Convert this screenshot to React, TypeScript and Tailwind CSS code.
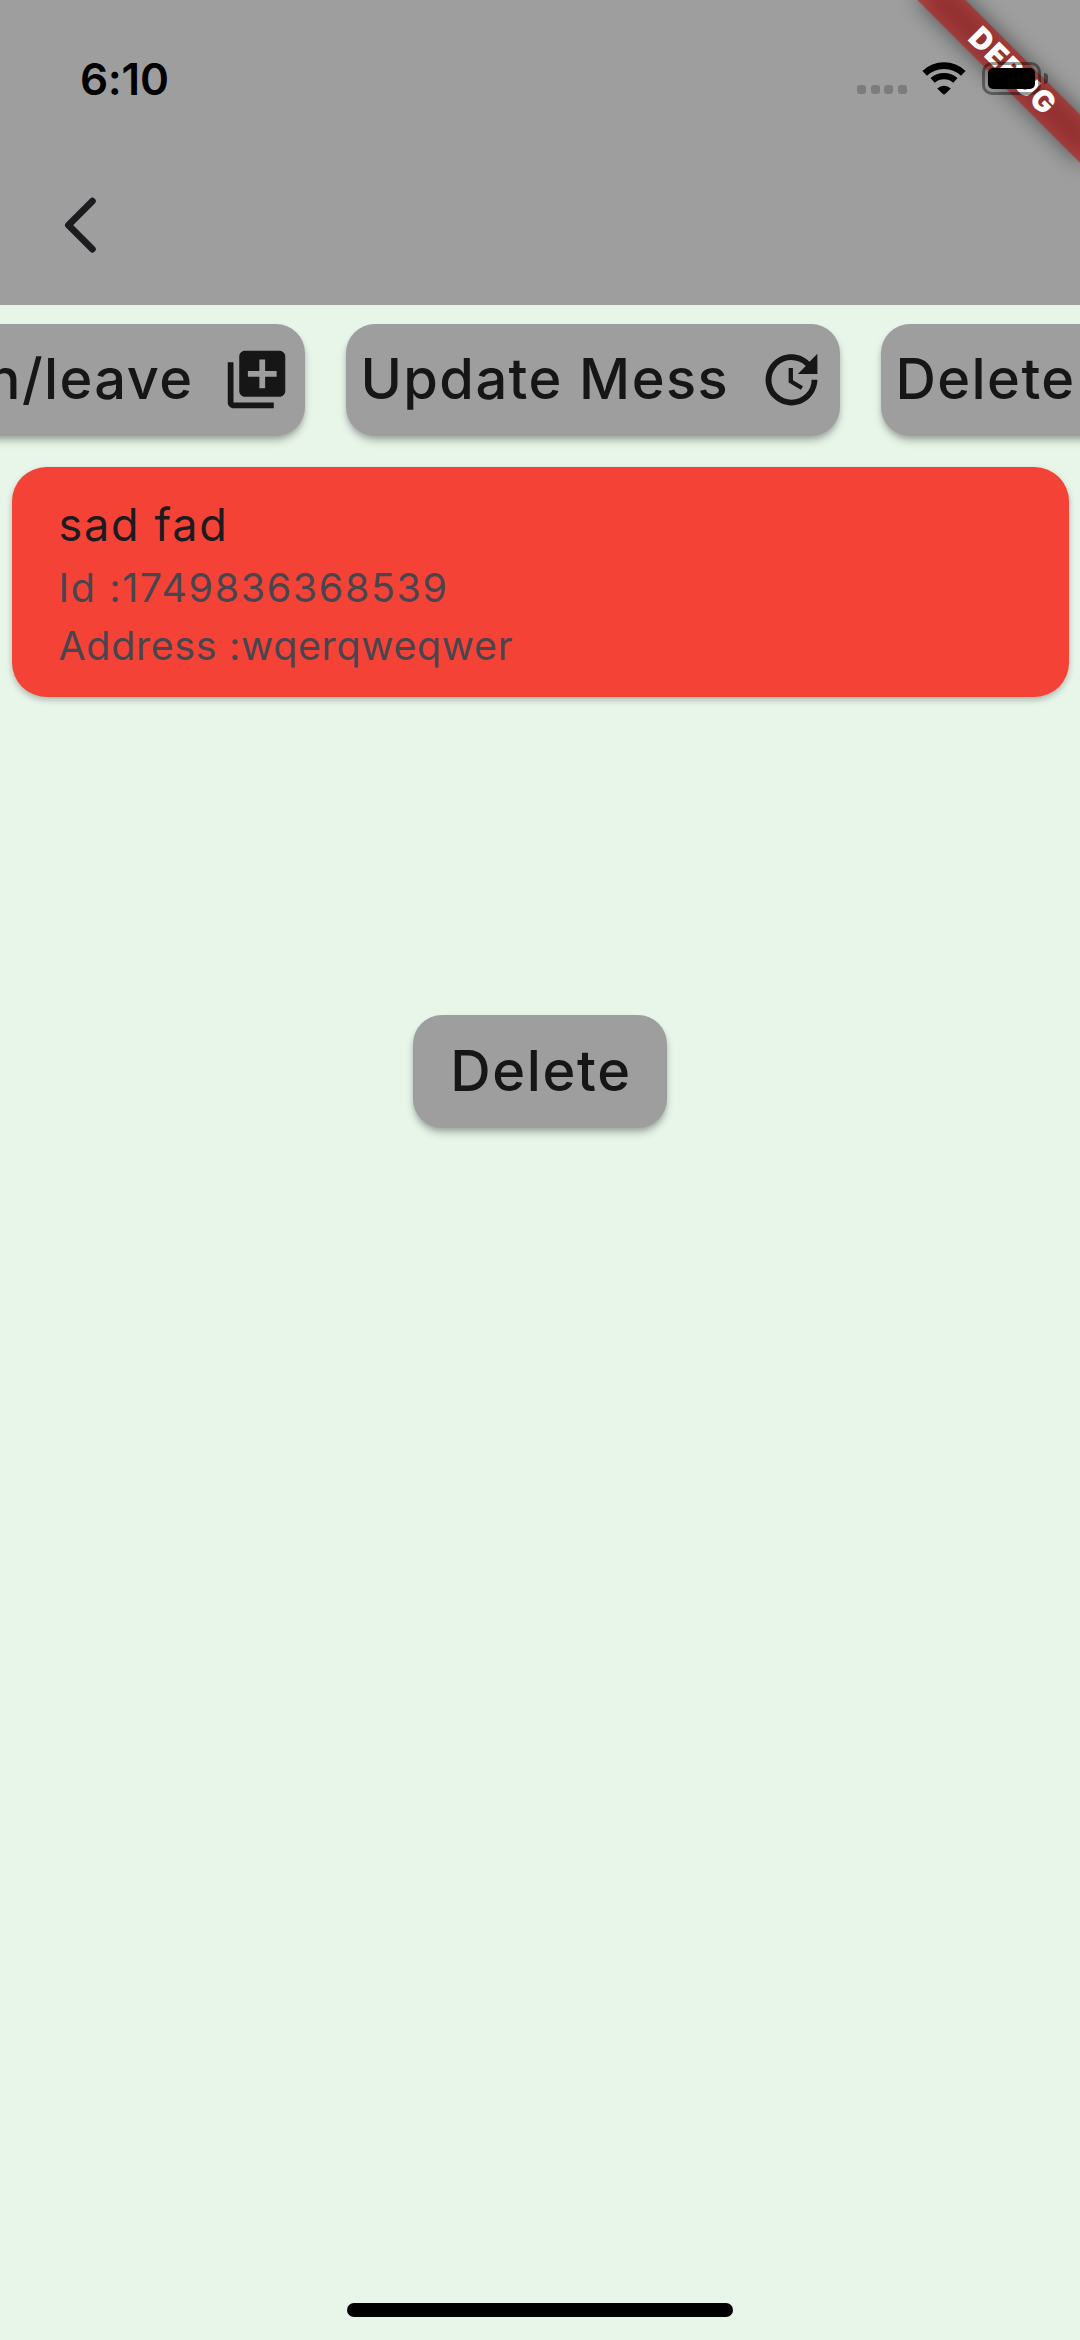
import React from "react";
import { MdLibraryAdd, MdUpdate, MdDelete } from "react-icons/md";

const raised = "shadow-[0_6px_9px_-1px_rgba(0,0,0,0.22),0_3px_4px_rgba(0,0,0,0.12)]";

function StatusBar() {
  return (
    <div className="relative z-20 flex h-[144px] items-start justify-between pl-[80px] pr-[32px] pt-[61.5px] text-black">
      <span className="mt-[-5px] text-[44px] leading-[44px] font-semibold tracking-[-0.3px]">6:10</span>
      <div className="flex items-start">
        <div className="mt-[23.5px] flex gap-[4.5px]">
          {[0, 1, 2, 3].map((i) => (
            <span key={i} className="size-[9px] rounded-[3px] bg-[#7c7c7c]" />
          ))}
        </div>
        <svg className="ml-[15.5px] h-[33px] w-[44px]" viewBox="0 0 44 33" fill="none">
          <path d="M2.7 12.8 A28 28 0 0 1 41.3 12.8" transform="translate(0 -1.5)" stroke="#000" strokeWidth="6.6" />
          <path d="M10.6 19.2 A17.3 17.3 0 0 1 33.4 19.2" transform="translate(0 -0.8)" stroke="#000" strokeWidth="6.4" />
          <path d="M15.2 26.4 A10 10 0 0 1 28.8 26.4 L22.8 32.2 Q22 32.9 21.2 32.2 Z" fill="#000" />
        </svg>
        <div className="ml-[15.5px] mt-[0.5px] flex items-center">
          <div className="h-[33px] w-[59px] rounded-[10px] border-[3px] border-black/40 p-[3px]">
            <div className="h-full w-full rounded-[5px] bg-black" />
          </div>
          <div className="ml-[3.5px] h-[11px] w-[4px] rounded-r-full bg-black/45" />
        </div>
      </div>
    </div>
  );
}

function DebugBanner() {
  return (
    <div className="absolute right-0 top-0 z-10 size-[320px] overflow-hidden">
      <div className="absolute right-0 top-0 size-0 rotate-45">
        <div className="absolute left-[-115.2px] top-[80.64px] h-[34.56px] w-[230.4px] bg-black/50 blur-[11.4px]" />
        <div className="absolute left-[-115.2px] top-[80.64px] flex h-[34.56px] w-[230.4px] items-center justify-center bg-[#B71C1C]/63 pl-[6px] text-[29.6px] leading-none font-black tracking-[1.4px] text-white">
          DEBUG
        </div>
      </div>
    </div>
  );
}

function ActionButton({ label, icon }: { label: string; icon: React.ReactNode }) {
  return (
    <button
      className={`flex h-[112px] shrink-0 items-center rounded-[29px] bg-[#9e9e9e] pl-[15px] pr-[14.5px] text-[56px] leading-[80px] font-[450] tracking-[1.4px] whitespace-nowrap text-[#161616] ${raised}`}
    >
      <span className="mr-[28px] pb-[2px]">{label}</span>
      <span className="ml-auto size-[69px] shrink-0">{icon}</span>
    </button>
  );
}

export default function App() {
  return (
    <div className="relative flex h-[2340px] w-[1080px] flex-col overflow-hidden bg-[#e8f5e9] font-['Inter',sans-serif]">
      <DebugBanner />
      <header className="h-[305.3px] shrink-0 bg-[#9e9e9e]">
        <StatusBar />
        <div className="flex h-[161px] items-center pl-[60px]">
          <svg className="h-[60px] w-[40px]" viewBox="60 194.5 40 60" fill="none">
            <path d="M92.4 200.7 L68.4 224.6 L92.4 248.6" stroke="#1d1b20" strokeWidth="6.8" strokeLinecap="round" strokeLinejoin="round" />
          </svg>
        </div>
      </header>
      <nav className="mt-[18.7px] flex h-[112px] shrink-0 justify-center gap-[40.5px]">
        <div className="flex w-[305px] shrink-0 justify-end">
          <ActionButton label="Join/leave" icon={<MdLibraryAdd className="size-full" />} />
        </div>
        <div className="flex w-[494.5px] shrink-0 *:w-full">
          <ActionButton label="Update Mess" icon={<MdUpdate className="size-full" />} />
        </div>
        <div className="flex w-[199.5px] shrink-0">
          <ActionButton label="Delete Mess" icon={<MdDelete className="size-full" />} />
        </div>
      </nav>
      <section className="mx-[11.5px] mt-[31.5px] h-[230px] shrink-0 rounded-[34.5px] bg-[#f44336] px-[47px] pt-[24px] shadow-[0_3px_6px_rgba(0,0,0,0.25)]">
        <h2 className="text-[45px] leading-[67.5px] font-normal tracking-[1.7px] text-[#1d1b20]">sad fad</h2>
        <p className="text-[39.5px] leading-[58px] tracking-[1.6px] text-[#49454f]">Id :1749836368539</p>
        <p className="text-[39.5px] leading-[58px] tracking-[0.6px] text-[#49454f]">Address :wqerqweqwer</p>
      </section>
      <button
        className={`mx-auto mt-[318px] flex h-[112.5px] w-[253.5px] shrink-0 items-center justify-center rounded-[29px] bg-[#9e9e9e] pb-[2px] pl-[2px] text-[56px] leading-[80px] font-[450] tracking-[1.6px] text-[#161616] ${raised}`}
      >
        Delete
      </button>
      <div className="mx-auto mt-auto mb-[23px] h-[14.5px] w-[386px] rounded-full bg-black" />
    </div>
  );
}
